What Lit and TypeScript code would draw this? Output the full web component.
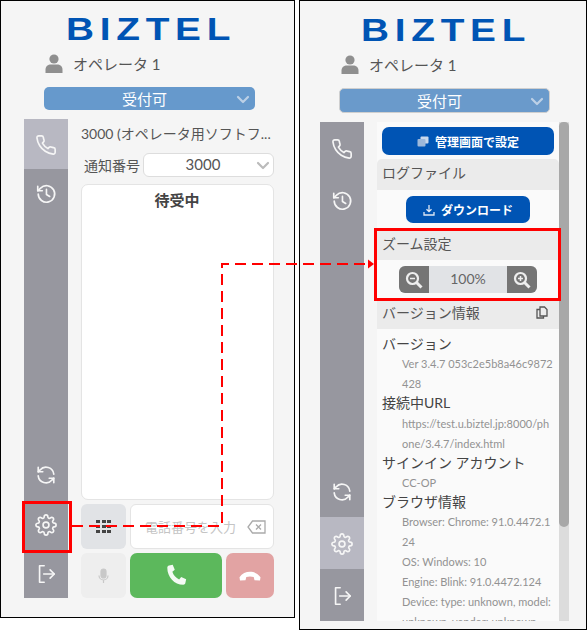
import { LitElement, html, css, svg } from "lit";
import { customElement } from "lit/decorators.js";

const line = (inner: unknown, size = 22, sw = 1.8) => html`<svg width=${size} height=${size} viewBox="0 0 24 24" fill="none" stroke="currentColor" stroke-width=${sw} stroke-linecap="round" stroke-linejoin="round">${inner}</svg>`;

const phone = () => line(svg`<path d="M22 16.92v3a2 2 0 0 1-2.18 2 19.79 19.79 0 0 1-8.63-3.07 19.5 19.5 0 0 1-6-6 19.79 19.79 0 0 1-3.07-8.67A2 2 0 0 1 4.11 2h3a2 2 0 0 1 2 1.72 12.84 12.84 0 0 0 .7 2.81 2 2 0 0 1-.45 2.11L8.09 9.91a16 16 0 0 0 6 6l1.27-1.27a2 2 0 0 1 2.11-.45 12.84 12.84 0 0 0 2.81.7A2 2 0 0 1 22 16.92z"/>`);
const history = () => line(svg`<path d="M3.500 12a9 9 0 1 0 2.600-6.400L3 8.500"/><path d="M3 3.500v5h5"/><path d="M12.500 7v5.500l3.500 2.200"/>`);
const sync = () => line(svg`<path d="M20.500 11a8.500 8.500 0 0 0-15-4.500L3.500 8.500"/><path d="M3.500 3.500v5h5"/><path d="M3.500 13a8.500 8.500 0 0 0 15 4.500l2-2"/><path d="M20.500 20.500v-5h-5"/>`);
const gear = () => line(svg`<circle cx="12" cy="12" r="3.200"/><path d="M19.4 15a1.65 1.65 0 0 0 .33 1.82l.06.06a2 2 0 0 1 0 2.83 2 2 0 0 1-2.83 0l-.06-.06a1.65 1.65 0 0 0-1.82-.33 1.65 1.65 0 0 0-1 1.51V21a2 2 0 0 1-2 2 2 2 0 0 1-2-2v-.09A1.65 1.65 0 0 0 9 19.4a1.65 1.65 0 0 0-1.82.33l-.06.06a2 2 0 0 1-2.83 0 2 2 0 0 1 0-2.83l.06-.06a1.65 1.65 0 0 0 .33-1.82 1.65 1.65 0 0 0-1.51-1H3a2 2 0 0 1-2-2 2 2 0 0 1 2-2h.09A1.65 1.65 0 0 0 4.6 9a1.65 1.65 0 0 0-.33-1.82l-.06-.06a2 2 0 0 1 0-2.83 2 2 0 0 1 2.83 0l.06.06a1.65 1.65 0 0 0 1.82.33H9a1.65 1.65 0 0 0 1-1.51V3a2 2 0 0 1 2-2 2 2 0 0 1 2 2v.09a1.65 1.65 0 0 0 1 1.51 1.65 1.65 0 0 0 1.82-.33l.06-.06a2 2 0 0 1 2.83 0 2 2 0 0 1 0 2.83l-.06.06a1.65 1.65 0 0 0-.33 1.82V9a1.65 1.65 0 0 0 1.51 1H21a2 2 0 0 1 2 2 2 2 0 0 1-2 2h-.09a1.65 1.65 0 0 0-1.51 1z"/>`);
const logout = () => line(svg`<path d="M10 3H5v18h5"/><path d="M9.500 12H21"/><path d="M16.500 7.500L21 12l-4.500 4.500"/>`);
const chevron = () => html`<svg class="chev" width="14" height="9" viewBox="0 0 14 9" fill="none" stroke="currentColor" stroke-width="2.200" stroke-linecap="round" stroke-linejoin="round"><path d="M2 2l5 5 5-5"/></svg>`;
const person = () => html`<svg width="18" height="19" viewBox="0 0 18 19" fill="#8f8f8f"><circle cx="9" cy="5" r="4.600"/><path d="M0.500 19v-3.200C0.500 12.500 3 10.600 6 10.600h6c3 0 5.500 1.900 5.500 5.200V19z"/></svg>`;

@customElement("app-root")
export class AppRoot extends LitElement {
  static styles = css`
    :host { display: block; position: relative; width: 588px; height: 630px; background: #fff; overflow: hidden; font-family: Lato, "Noto Sans CJK JP", sans-serif; color: #555; }
    .page { display: flex; gap: 4px; align-items: flex-start; }
    .panel { box-sizing: border-box; background: #f5f5f5; border: 1px solid #000; display: flex; flex-direction: column; }
    .left { width: 295px; height: 618px; --tab: 49.6px; }
    .right { width: 288px; height: 630px; --tab: 52px; }
    .logo { display: flex; justify-content: center; align-items: center; height: 44px; margin-top: 6px; padding-left: 3px; }
    .logo span { font-family: "Liberation Sans", sans-serif; font-weight: 700; font-size: 31px; line-height: 31px; letter-spacing: 4.6px; margin-right: -4px; color: #0054b4; transform: scaleX(1.25); }
    .user { display: flex; align-items: center; gap: 10px; height: 22px; font-size: 15px; margin: 1px 0 1px 44px; color: #555; }
    .status { position: relative; display: flex; align-items: center; justify-content: center; box-sizing: border-box; width: 211px; height: 23px; margin: 12px 0 9px 43px; padding-right: 10px; background: #6699cc; border-radius: 5px; color: #fff; font-size: 15px; }
    .status .chev { position: absolute; right: 5px; top: 8px; color: #bcd0e6; }
    .right .status { height: 25px; margin: 12px 0 9px 39px; background: #6a9acb; border: 1px solid #cfcfcf; }
    .right .logo { margin-top: 7px; }
    .right .user { margin: 1px 0 1px 41px; }
    .body { display: flex; flex: 1; min-height: 0; }
    .left .body { margin: 0 0 19px 23px; gap: 13px; }
    .right .body { margin: 0 0 8px 20px; gap: 13px; }
    .side { width: 44px; flex: none; background: #97979f; display: flex; flex-direction: column; color: #fff; }
    .tab { height: var(--tab); flex: none; display: flex; align-items: center; justify-content: center; color: #f6f6f6; }
    .tab svg { position: relative; top: 1px; }
    .tab.on { background: #b8b8c2; }
    .spacer { flex: 1; }
    .content { width: 193px; display: flex; flex-direction: column; }
    .title { font-size: 14px; height: 30px; line-height: 30px; white-space: nowrap; color: #555; }
    .notify { display: flex; align-items: center; height: 24px; margin: 4px 0 7px; font-size: 14px; }
    .notify label { width: 59px; margin-right: 3px; text-align: right; flex: none; }
    .select { position: relative; box-sizing: border-box; flex: 1; height: 24px; background: #fff; border: 1.5px solid #ddd; border-radius: 6px; display: flex; align-items: center; justify-content: center; font-size: 15px; padding: 0 11px 2px 0; }
    .select .chev { position: absolute; right: 3px; top: 7px; color: #bbb; }
    .screen { box-sizing: border-box; height: 316px; background: #fff; border: 1px solid #e4e4e4; border-radius: 7px; text-align: center; font-weight: 700; font-size: 15px; line-height: 20px; padding: 5px 1px 0 0; color: #444; }
    .row { display: flex; gap: 4px; height: 45px; margin-top: 4px; }
    .keypad { width: 45px; flex: none; background: #e1e3e6; border-radius: 6px; display: flex; align-items: center; justify-content: center; }
    .grid { display: grid; grid-template-columns: repeat(3, 4px); gap: 1.5px; }
    .grid i { height: 3.5px; background: #444; }
    .input { box-sizing: border-box; flex: 1; background: #fff; border: 1px solid #e4e4e4; border-radius: 6px; display: flex; align-items: center; justify-content: space-between; padding: 0 7px 0 14px; font-size: 13px; color: #c4c4c4; white-space: nowrap; }
    .input svg { flex: none; }
    .mic { width: 45px; flex: none; background: #eee; border-radius: 6px; display: flex; align-items: center; justify-content: center; }
    .call { flex: 1; background: #5cb85c; border-radius: 7px; display: flex; align-items: center; justify-content: center; }
    .hang { width: 48px; flex: none; background: #e2a3a3; border-radius: 7px; display: flex; align-items: center; justify-content: center; }
    .settings { width: 192px; display: flex; overflow: hidden; }
    .scroll { width: 182px; flex: none; background: #fafafa; overflow: hidden; padding-top: 5px; box-sizing: border-box; }
    .bar { width: 10px; flex: none; background: #dcdcdc; }
    .thumb { height: 405px; background: #a8a8a8; border-radius: 5px 5px 6px 6px; }
    .btn { display: flex; align-items: center; justify-content: center; gap: 6px; background: #0054b4; color: #fff; font-weight: 700; font-size: 12px; border-radius: 7px; }
    .btn.admin { height: 28px; margin: 0 5px 4px; }
    .sec { box-sizing: border-box; height: 29px; padding: 0 5px 5px; background: #ebebeb; font-size: 14px; color: #555; display: flex; justify-content: space-between; align-items: center; }
    .sec.first { height: 31px; border-radius: 5px 5px 0 0; }
    .sec svg { margin-right: 6px; }
    .dl { height: 41px; display: flex; justify-content: center; padding-top: 6px; box-sizing: border-box; }
    .btn.down { width: 124px; height: 27px; }
    .zoombody { height: 40px; display: flex; justify-content: center; padding-top: 6px; box-sizing: border-box; }
    .zoomer { width: 138px; height: 27px; display: flex; background: #e1e3e6; border-radius: 6px; overflow: hidden; }
    .zbtn { width: 30px; background: #757575; display: flex; align-items: center; justify-content: center; flex: none; }
    .zval { flex: 1; text-align: center; line-height: 25px; font-size: 14px; color: #666; }
    .info { padding: 5px 0 0 5px; }
    .info h4 { margin: 0; font-weight: 400; font-size: 14px; line-height: 19.3px; padding-bottom: 1px; color: #444; }
    .info p { margin: 0; padding-left: 20px; padding-right: 6px; font-size: 11px; line-height: 20px; color: #929292; word-break: break-all; }
    .info p + h4 { margin-top: -1px; }
    .notes { position: absolute; left: 0; top: 0; pointer-events: none; }
  `;

  private chrome(name: string, activeGear: boolean, activePhone: boolean, main: unknown) {
    return html`<section class="panel ${name}">
      <div class="logo"><span>BIZTEL</span></div>
      <div class="user">${person()}<span>オペレータ 1</span></div>
      <div class="status">受付可${chevron()}</div>
      <div class="body">
        <nav class="side">
          <div class="tab ${activePhone ? "on" : ""}">${phone()}</div>
          <div class="tab">${history()}</div>
          <div class="spacer"></div>
          <div class="tab">${sync()}</div>
          <div class="tab ${activeGear ? "on" : ""}">${gear()}</div>
          <div class="tab">${logout()}</div>
        </nav>
        ${main}
      </div>
    </section>`;
  }

  private phonePane() {
    return html`<div class="content">
      <div class="title">3000 (オペレータ用ソフトフ...</div>
      <div class="notify"><label>通知番号</label><div class="select">3000${chevron()}</div></div>
      <div class="screen">待受中</div>
      <div class="row">
        <div class="keypad"><div class="grid">${Array.from({ length: 9 }, () => html`<i></i>`)}</div></div>
        <div class="input">電話番号を入力
          <svg width="19" height="14" viewBox="0 0 19 14" fill="none" stroke="#aaa" stroke-width="1.300"><path d="M5.500 1H18v12H5.500L1 7z"/><path d="M9 4.500l5 5M14 4.500l-5 5"/></svg>
        </div>
      </div>
      <div class="row">
        <div class="mic"><svg width="11" height="16" viewBox="0 0 11 16" fill="none" stroke="#c8c8c8" stroke-width="1.200"><rect x="3" y="1" width="5" height="9" rx="2.500" fill="#c8c8c8"/><path d="M1 7.500a4.500 4.500 0 0 0 9 0M5.500 12v3"/></svg></div>
        <div class="call"><svg width="23" height="23" viewBox="0 0 20 20" fill="#f4faf4"><path d="M3 .8l3.200-.6L8 4.600 5.900 6.300c.9 2.900 3.100 5.400 5.900 6.700l1.800-2.100 4.300 1.900-.7 3.300c-.2.900-.9 1.500-1.800 1.500C7.700 17.600 1.500 10.800 1.500 2.700c0-.9.6-1.700 1.500-1.900z" transform="translate(0.500 0.500)"/></svg></div>
        <div class="hang"><svg width="22" height="10" viewBox="0 0 22 10" fill="#fff"><path d="M1 9.500L.5 6.200C3 2.500 7 .8 11 .8s8 1.700 10.500 5.400L21 9.500l-5.500-.2-.8-3.300c-2.400-.8-5-.8-7.400 0L6.500 9.300z"/></svg></div>
      </div>
    </div>`;
  }

  private settingsPane() {
    return html`<div class="settings">
      <div class="scroll">
        <div class="btn admin">
          <svg width="12" height="11" viewBox="0 0 12 11" fill="#c9d8ec"><rect x="3.500" y="0.500" width="8" height="7" rx="1"/><rect x="0.500" y="3" width="8" height="7.500" rx="1" fill="#9db8da"/></svg>
          <span>管理画面で設定</span>
        </div>
        <div class="sec first">ログファイル</div>
        <div class="dl"><div class="btn down">
          <svg width="12" height="12" viewBox="0 0 12 12" fill="none" stroke="#dfe8f4" stroke-width="1.300"><path d="M6 1v6.500M3.500 5.200L6 7.700l2.500-2.500M1 8v3h10V8"/></svg>
          <span>ダウンロード</span>
        </div></div>
        <div class="sec">ズーム設定</div>
        <div class="zoombody"><div class="zoomer">
          <div class="zbtn"><svg width="18" height="18" viewBox="0 0 18 18" fill="none" stroke="#eee" stroke-width="2.200"><circle cx="7.500" cy="7.500" r="5.500"/><path d="M11.500 11.500l5 5" stroke-width="3"/><path d="M5 7.500h5" stroke-width="1.500"/></svg></div>
          <div class="zval">100%</div>
          <div class="zbtn"><svg width="18" height="18" viewBox="0 0 18 18" fill="none" stroke="#eee" stroke-width="2.200"><circle cx="7.500" cy="7.500" r="5.500"/><path d="M11.500 11.500l5 5" stroke-width="3"/><path d="M5 7.500h5M7.500 5v5" stroke-width="1.500"/></svg></div>
        </div></div>
        <div class="sec">バージョン情報
          <svg width="12" height="13" viewBox="0 0 12 13" fill="none" stroke="#555" stroke-width="1.300"><path d="M4 1h4.500L11 3.500V10H4z"/><path d="M4 3.500H1V12h6.500v-2"/></svg>
        </div>
        <div class="info">
          <h4>バージョン</h4>
          <p>Ver 3.4.7 053c2e5b8a46c9872428</p>
          <h4>接続中URL</h4>
          <p>https://test.u.biztel.jp:8000/phone/3.4.7/index.html</p>
          <h4>サインイン アカウント</h4>
          <p>CC-OP</p>
          <h4>ブラウザ情報</h4>
          <p>Browser: Chrome: 91.0.4472.124</p>
          <p>OS: Windows: 10</p>
          <p>Engine: Blink: 91.0.4472.124</p>
          <p>Device: type: unknown, model:<br />unknown, vendor: unknown</p>
        </div>
      </div>
      <div class="bar"><div class="thumb"></div></div>
    </div>`;
  }

  render() {
    return html`<div class="page">
        ${this.chrome("left", false, true, this.phonePane())}
        ${this.chrome("right", true, false, this.settingsPane())}
      </div>
      <svg class="notes" width="588" height="630" fill="none" stroke="#f00">
        <rect x="23.500" y="502.500" width="47" height="49" stroke-width="3"/>
        <rect x="375.500" y="229.500" width="184" height="70" stroke-width="3"/>
        <path d="M72 526H222V264H368" stroke-width="2" stroke-dasharray="11 6"/>
        <path d="M368 259.500L374 264l-6 4.500z" fill="#f00" stroke="none"/>
      </svg>`;
  }
}
